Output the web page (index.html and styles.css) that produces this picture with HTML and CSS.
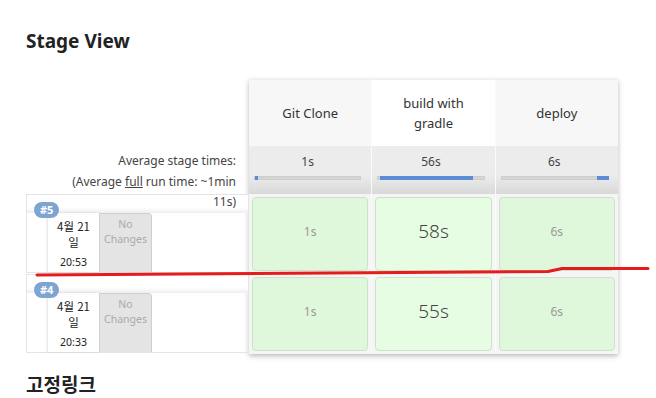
FILE: index.html
```html
<!DOCTYPE html>
<html lang="ko">
<head>
    <meta charset="UTF-8">
    <meta name="viewport" content="width=device-width, initial-scale=1.0">
    <title>Stage View</title>
    <link rel="stylesheet" href="styles.css">
</head>
<body>

<div class="page">
    <h2 class="section-title">Stage View</h2>

    <div class="stage-view">
        <!-- 왼쪽: 빌드 목록 -->
        <div class="builds">
            <div class="builds-head"></div>
            <div class="avg-label">Average stage times:<br>(Average <u>full</u> run time: ~1min 11s)</div>

            <div class="build-row">
                <span class="badge">#5</span>
                <div class="build-top"></div>
                <div class="build-body">
                    <div class="build-date">
                        <div class="date">4월 21<br>일</div>
                        <div class="time">20:53</div>
                    </div>
                    <div class="changes">No<br>Changes</div>
                </div>
            </div>

            <div class="build-row">
                <span class="badge">#4</span>
                <div class="build-top"></div>
                <div class="build-body">
                    <div class="build-date">
                        <div class="date">4월 21<br>일</div>
                        <div class="time">20:33</div>
                    </div>
                    <div class="changes">No<br>Changes</div>
                </div>
            </div>
        </div>

        <!-- 오른쪽: 스테이지 -->
        <div class="stages">
            <div class="stage-col">
                <div class="stage-name">Git Clone</div>
                <div class="stage-avg">
                    <div class="avg-time">1s</div>
                    <div class="bar"><div class="fill" style="left: 0; width: 3px;"></div></div>
                </div>
                <div class="stage-cell"><div class="cell-box">1s</div></div>
                <div class="stage-cell"><div class="cell-box">1s</div></div>
            </div>
            <div class="stage-col active">
                <div class="stage-name">build with<br>gradle</div>
                <div class="stage-avg">
                    <div class="avg-time">56s</div>
                    <div class="bar"><div class="fill" style="left: 2px; width: 93px;"></div></div>
                </div>
                <div class="stage-cell"><div class="cell-box">58s</div></div>
                <div class="stage-cell"><div class="cell-box">55s</div></div>
            </div>
            <div class="stage-col">
                <div class="stage-name">deploy</div>
                <div class="stage-avg">
                    <div class="avg-time">6s</div>
                    <div class="bar"><div class="fill" style="left: 95px; width: 12px;"></div></div>
                </div>
                <div class="stage-cell"><div class="cell-box">6s</div></div>
                <div class="stage-cell"><div class="cell-box">6s</div></div>
            </div>
        </div>
    </div>

    <h2 class="section-title permalink">고정링크</h2>
</div>

<!-- 빨간 펜 표시 -->
<svg class="pen-mark" width="656" height="398" viewBox="0 0 656 398">
    <path d="M37 275 Q300 273.5 548 271.5 L562 268.5 L648 268.5" fill="none" stroke="#e41c1c" stroke-width="3" stroke-linecap="round" stroke-linejoin="round"/>
</svg>

</body>
</html>
```

FILE: styles.css
```css
body {
    margin: 0;
    padding: 0;
    background: #fff;
    color: #333;
    font-family: "Noto Sans", "Noto Sans CJK KR", sans-serif;
}
.page {
    padding: 28px 0 0 26px;
}
.section-title {
    margin: 0;
    font-size: 19px;
    line-height: 26px;
    font-weight: bold;
    color: #222;
    font-family: "Noto Sans", "Noto Sans CJK KR", sans-serif;
}
.permalink {
    margin-top: 17px;
    font-family: "Noto Sans CJK KR", sans-serif;
}
.stage-view {
    display: flex;
    margin-top: 25px;
}

/* 왼쪽 빌드 목록 */
.builds {
    width: 223px;
    font-size: 11px;
}
.builds-head {
    height: 67px;
}
.avg-label {
    position: relative;
    z-index: 1;
    height: 48px;
    padding: 5px 13px 0 30px;
    box-sizing: border-box;
    text-align: right;
    font-size: 12px;
    line-height: 20.5px;
    color: #444;
}
.build-row {
    position: relative;
    height: 77px;
    border: 1px solid #e4e4e4;
    margin-bottom: 1px;
}
.build-top {
    height: 18px;
    background: linear-gradient(#fff 70%, #eee);
}
.badge {
    position: absolute;
    left: 7px;
    top: 7px;
    padding: 0 6px;
    height: 16px;
    line-height: 16px;
    border-radius: 8px;
    background: #7ea5d0;
    color: #fff;
    font-size: 11px;
    font-weight: bold;
}
.build-body {
    display: flex;
    padding-left: 21px;
    height: 59px;
}
.build-date {
    width: 51px;
    background: #fff;
    box-shadow: -1px 0 2px rgba(0, 0, 0, 0.12);
    text-align: center;
    color: #222;
}
.date {
    padding-top: 5px;
    font-size: 11.5px;
    line-height: 16px;
    font-family: "Noto Sans CJK KR", sans-serif;
}
.time {
    margin-top: 5px;
    font-size: 10.5px;
    line-height: 14px;
}
.changes {
    width: 51px;
    background: #e4e4e4;
    border: 1px solid #cfcfcf;
    border-bottom: none;
    border-radius: 0 4px 0 0;
    text-align: center;
    color: #aaa;
    font-size: 10.5px;
    line-height: 15px;
    padding-top: 3px;
}

/* 오른쪽 스테이지 */
.stages {
    display: flex;
    gap: 1px;
    width: 369px;
    background: #fafafa;
    box-shadow: 0 2px 5px rgba(0, 0, 0, 0.28);
    align-self: flex-start;
}
.stage-col {
    flex: 1;
    background: #f5f5f5;
}
.stage-name {
    height: 67px;
    display: flex;
    align-items: center;
    justify-content: center;
    text-align: center;
    background: #f7f7f7;
    border-top: 1px solid #eee;
    box-sizing: border-box;
    font-size: 13px;
    line-height: 20px;
    color: #333;
}
.active .stage-name {
    background: #fff;
}
.stage-avg {
    height: 48px;
    padding: 8px 10px 0 5px;
    box-sizing: border-box;
    background: linear-gradient(#ececec 60%, #d9d9d9);
    text-align: center;
    font-size: 12px;
    color: #444;
}
.avg-time {
    line-height: 16px;
}
.bar {
    position: relative;
    height: 4px;
    margin-top: 6px;
    background: #d5d5d5;
    border: 1px solid #cdcdcd;
    box-sizing: border-box;
}
.fill {
    position: absolute;
    top: -1px;
    height: 4px;
    background: #5a8dd6;
}
.stage-cell {
    height: 80px;
    padding: 3px;
    box-sizing: border-box;
}
.cell-box {
    height: 100%;
    display: flex;
    align-items: center;
    justify-content: center;
    padding-bottom: 6px;
    box-sizing: border-box;
    background: #dff7da;
    border: 1px solid #cde3c9;
    border-radius: 4px;
    color: #999;
    font-size: 12px;
}
.active .cell-box {
    background: #e6fde3;
    color: #444;
    font-size: 19px;
    font-weight: 300;
}
.pen-mark {
    position: absolute;
    left: 0;
    top: 0;
    pointer-events: none;
}
```
